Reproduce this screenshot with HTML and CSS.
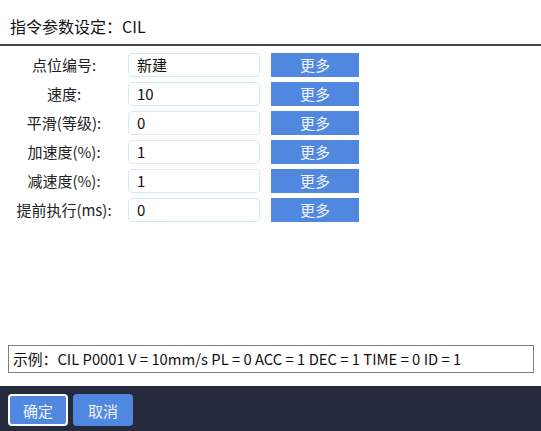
FILE: index.html
```html
<!DOCTYPE html>
<html lang="zh">
<head>
<meta charset="utf-8">
<link rel="stylesheet" href="styles.css">
</head>
<body>
<div class="page">
  <div class="header">指令参数设定：CIL</div>
  <div class="form">
    <div class="row"><span class="label">点位编号:</span><div class="input">新建</div><button class="more">更多</button></div>
    <div class="row"><span class="label">速度:</span><div class="input">10</div><button class="more">更多</button></div>
    <div class="row"><span class="label">平滑(等级):</span><div class="input">0</div><button class="more">更多</button></div>
    <div class="row"><span class="label">加速度(%):</span><div class="input">1</div><button class="more">更多</button></div>
    <div class="row"><span class="label">减速度(%):</span><div class="input">1</div><button class="more">更多</button></div>
    <div class="row"><span class="label">提前执行(ms):</span><div class="input">0</div><button class="more">更多</button></div>
  </div>
  <div class="spacer"></div>
  <div class="example">示例：CIL P0001 V = 10mm/s PL = 0 ACC = 1 DEC = 1 TIME = 0 ID = 1</div>
  <div class="footer">
    <button class="btn btn-ok">确定</button>
    <button class="btn">取消</button>
  </div>
</div>
</body>
</html>
```
FILE: styles.css
```css
* { box-sizing: border-box; }
html, body { margin: 0; padding: 0; background: #fff; }
body {
  font-family: "Noto Sans CJK SC", "Noto Sans", sans-serif;
  color: #111;
}
.page {
  width: 541px;
  height: 431px;
  display: flex;
  flex-direction: column;
}
.header {
  height: 46px;
  padding: 8px 0 0 10px;
  font-size: 16px;
  line-height: 36px;
  border-bottom: 2px solid #484848;
}
.form {
  margin-top: 7px;
  display: flex;
  flex-direction: column;
  gap: 5px;
}
.row {
  display: flex;
  align-items: center;
  height: 24px;
}
.label {
  width: 128px;
  text-align: center;
  font-size: 15px;
  line-height: 24px;
  color: #222;
}
.input {
  width: 132px;
  height: 24px;
  border: 1px solid #d3ebf5;
  border-radius: 4px;
  padding-left: 8px;
  font-size: 15px;
  line-height: 22px;
  color: #111;
}
.more {
  margin-left: 11px;
  width: 88px;
  height: 24px;
  border: none;
  background: #5088e0;
  color: #f0f4ff;
  font-family: inherit;
  font-size: 15px;
  line-height: 24px;
  padding: 0;
}
.spacer { flex: 1; }
.example {
  margin: 0 7px 13px 8px;
  height: 28px;
  border: 1px solid #808080;
  padding-left: 4px;
  font-size: 14.8px;
  line-height: 26px;
  color: #111;
  white-space: nowrap;
}
.footer {
  height: 45px;
  background: #252a3c;
  display: flex;
  align-items: flex-start;
  padding: 8px 0 0 8px;
  gap: 5px;
}
.btn {
  width: 60px;
  height: 32px;
  border: none;
  border-radius: 4px;
  background: #5088e0;
  color: #f0f4ff;
  font-family: inherit;
  font-size: 15px;
  padding: 0;
}
.btn-ok {
  border: 2px solid #fff;
}
```
